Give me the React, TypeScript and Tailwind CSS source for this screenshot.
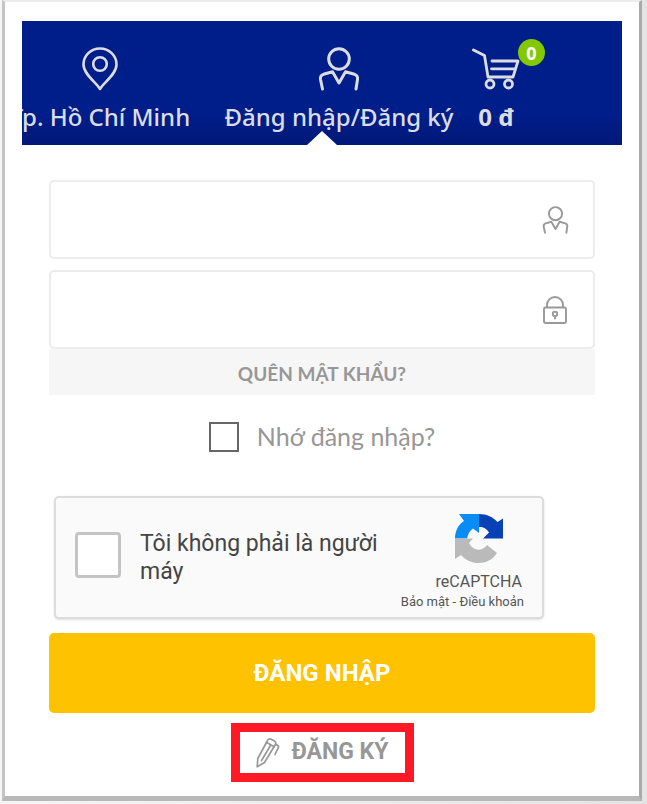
import type { InputHTMLAttributes, ReactNode } from 'react'

interface IconProps {
  className?: string
}

function PinIcon({ className }: IconProps) {
  return (
    <svg className={className} viewBox="0 0 36 44" fill="none" stroke="currentColor" strokeWidth={2.6} strokeLinejoin="round">
      <path d="M18 42C14 35.500 1.500 27 1.500 17.500a16.500 16 0 0 1 33 0C34.500 27 22 35.500 18 42z" />
      <circle cx="18" cy="17" r="6.800" />
    </svg>
  )
}

function UserIcon({ className }: IconProps) {
  return (
    <svg className={className} viewBox="0 0 42 44" fill="none" stroke="currentColor" strokeWidth={3} strokeLinecap="round" strokeLinejoin="round">
      <circle cx="21" cy="12" r="10.300" />
      <path d="M4.500 42L2.500 32.500c-.5-3 .4-4.300 3-5.200l9-2.600L21 36l6.500-11.300 9 2.600c2.600.9 3.500 2.200 3 5.200L38 42" />
    </svg>
  )
}

function CartIcon({ className }: IconProps) {
  return (
    <svg className={className} viewBox="0 0 48 42" fill="none" stroke="currentColor" strokeWidth={2.8} strokeLinecap="round" strokeLinejoin="round">
      <path d="M1.500 2l11 5.500L16 29h25l5-16H20" />
      <path d="M19.500 20.800H43" />
      <circle cx="18" cy="36" r="4" />
      <circle cx="36.500" cy="36" r="4" />
    </svg>
  )
}

function LockIcon({ className }: IconProps) {
  return (
    <svg className={className} viewBox="0 0 24 28" fill="none" stroke="currentColor" strokeWidth={1.9} strokeLinejoin="round">
      <rect x="1" y="11.500" width="22" height="15.500" rx="1.500" />
      <path d="M4 11.500V9a8 8 0 0 1 16 0v2.500" />
      <circle cx="12" cy="18" r="2.200" />
      <path d="M12 20.200v3" />
    </svg>
  )
}

function PencilIcon({ className }: IconProps) {
  return (
    <svg className={className} viewBox="0 0 24 31" fill="none" stroke="currentColor" strokeWidth={1.7} strokeLinecap="round" strokeLinejoin="round">
      <path d="M1.200 29.800L1.800 21.500 11.500 3.500c.7-1.500 2-2 3.500-1.300l3.500 1.900c1.300.8 1.600 2 .9 3.400L8.500 25.500z" />
      <path d="M10.500 5.500l7.800 4.300M14.500 8.500L5.500 23.500" />
      <path d="M19.800 7.200l2 1.200c.8.500 1 1.200.6 2L19 17.500" />
    </svg>
  )
}

function RecaptchaLogo({ className }: IconProps) {
  return (
    <svg className={className} viewBox="0 0 50 50">
      <path fill="#0a8cf5" d="M5 0h20v19l-6-4.500c-3.500 2.500-5 5.500-6 10H1C1 17 4 11 10 7z" />
      <path fill="#0841b5" d="M25 0c8 0 14 3 18.500 8L49 4.500v20H29l6-6c-2-3.500-5-5.500-10-5.500z" />
      <path fill="#bababa" d="M1 24.500h18l-4 4.500c4 8 13 9 18 2l10 8C35 52 16 52 7 41l-6 4z" />
    </svg>
  )
}

interface NavItemProps {
  icon: ReactNode
  label: string
  bold?: boolean
}

function NavItem({ icon, label, bold }: NavItemProps) {
  return (
    <a href="#" className="flex flex-col items-center justify-start whitespace-nowrap">
      <span className="relative flex h-11 items-center">{icon}</span>
      <span className={bold ? 'mt-2 text-2xl leading-9 font-bold' : 'mt-2 text-2xl leading-9 font-medium'}>
        {label}
      </span>
    </a>
  )
}

interface FieldProps extends InputHTMLAttributes<HTMLInputElement> {
  icon: ReactNode
}

function Field({ icon, ...props }: FieldProps) {
  return (
    <div className="relative">
      <input
        {...props}
        className="block h-[79px] w-full rounded-[5px] border-2 border-[#ececec] bg-white pr-20 pl-5 text-2xl text-[#666] outline-none"
      />
      <span className="pointer-events-none absolute inset-y-0 right-[26px] flex items-center text-[#999]">
        {icon}
      </span>
    </div>
  )
}

export default function App() {
  return (
    <div className="bg-linear-to-r from-[#f5f5f5] to-[#e4e4e4] pr-[5px] pb-[3px] pl-0.5 font-['Lato','Noto_Sans',sans-serif]">
      <main className="border-t-2 border-r-3 border-b-5 border-l-3 border-t-[#ececec] border-r-[#aaa] border-b-[#b8b8b8] border-l-[#c4c4c4] bg-white px-[17px] pt-[19px] pb-3.5">
        <header className="relative h-[124px] overflow-hidden bg-linear-to-b from-[#001e8a] from-75% to-[#001878] font-['Noto_Sans',sans-serif] text-[#dcdde3]">
          <nav className="-ml-[45px] grid grid-cols-[246px_232px_82px] pt-[26px]">
            <NavItem icon={<PinIcon className="h-11 w-9" />} label="Tp. Hồ Chí Minh" />
            <NavItem icon={<UserIcon className="h-11 w-[42px]" />} label="Đăng nhập/Đăng ký" />
            <NavItem
              bold
              label="0 đ"
              icon={
                <>
                  <CartIcon className="h-[42px] w-12" />
                  <span className="absolute -top-2 left-[46px] flex size-[27px] items-center justify-center rounded-full bg-[#84c800] text-lg font-bold text-white">
                    0
                  </span>
                </>
              }
            />
          </nav>
          <span className="absolute bottom-0 left-1/2 h-3.5 w-[30px] -translate-x-1/2 bg-white [clip-path:polygon(50%_0,100%_100%,0_100%)]" />
        </header>

        <form className="px-[27px] pt-[35px]" onSubmit={(e) => e.preventDefault()}>
          <Field type="text" aria-label="Tên đăng nhập" icon={<UserIcon className="h-7 w-[27px]" />} />
          <div className="mt-[11px]">
            <Field type="password" aria-label="Mật khẩu" icon={<LockIcon className="mr-0.5 h-7 w-6" />} />
          </div>
          <a href="#" className="flex h-[46px] items-center justify-center bg-[#f6f6f6] pt-1 text-[19px] font-bold text-[#979797]">
            QUÊN MẬT KHẨU?
          </a>

          <label className="mt-[27px] flex h-[30px] items-center justify-center gap-[18px] text-[25px] text-[#979797]">
            <input type="checkbox" className="size-[30px] appearance-none border-2 border-[#666] bg-white" />
            <span>Nhớ đăng nhập?</span>
          </label>

          {/* Captcha box */}
          <div className="mt-11 mr-[51px] ml-[5px] flex h-[123px] rounded-[5px] border-2 border-[#dcdcdc] bg-[#fafafa] pr-[18px] pl-[19px] font-['Roboto',sans-serif] shadow-sm">
            <label className="flex flex-1 items-start gap-[19px] pt-8 text-[23px] leading-7 text-[#444]">
              <input type="checkbox" className="mt-0.5 size-[46px] shrink-0 appearance-none rounded-sm border-3 border-[#c4c4c4] bg-white" />
              <span className="w-60">Tôi không phải là người máy</span>
            </label>
            <div className="flex shrink-0 flex-col items-end pt-4">
              <RecaptchaLogo className="mr-5 size-[50px]" />
              <span className="mt-1.5 mr-0.5 text-base leading-6 text-[#555]">reCAPTCHA</span>
              <span className="text-[13px] leading-4 text-[#555]">
                <a href="#">Bảo mật</a> - <a href="#">Điều khoản</a>
              </span>
            </div>
          </div>

          <button
            type="submit"
            className="mt-3.5 block h-20 w-full rounded-[5px] bg-[#ffc200] font-['Roboto',sans-serif] text-2xl font-bold text-white"
          >
            ĐĂNG NHẬP
          </button>

          <a
            href="#"
            className="mx-auto mt-2.5 flex h-[59px] w-[183px] items-center justify-center gap-3 border-9 border-[#fe1927] font-['Roboto',sans-serif] text-[23px] font-bold text-[#979797]"
          >
            <PencilIcon className="h-[31px] w-6" />
            ĐĂNG KÝ
          </a>
        </form>
      </main>
    </div>
  )
}
